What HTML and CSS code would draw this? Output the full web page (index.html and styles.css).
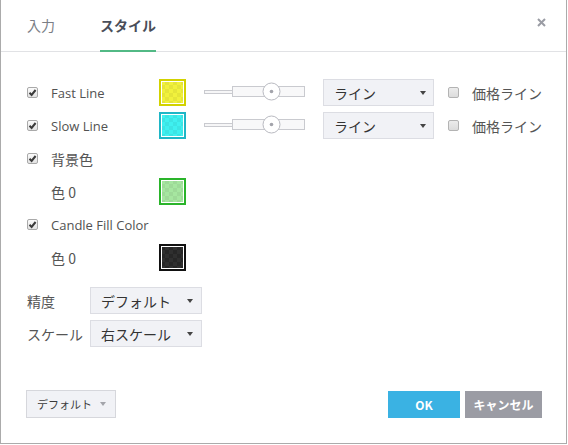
FILE: index.html
```html
<!DOCTYPE html>
<html lang="ja">
<head>
<meta charset="utf-8">
<title>スタイル</title>
<link rel="stylesheet" href="styles.css">
</head>
<body>
<div class="dialog">
  <div class="header">
    <div class="tab">入力</div>
    <div class="tab active">スタイル</div>
    <div class="close">
      <svg width="9" height="9" viewBox="0 0 9 9"><path d="M1 1 L8 8 M8 1 L1 8" stroke="#9a9ca4" stroke-width="2" fill="none"/></svg>
    </div>
  </div>

  <div class="content">
    <div class="row">
      <span class="cb on"><svg width="9" height="9" viewBox="0 0 9 9"><path d="M1.5 4.8 L3.6 6.9 L7.6 2" stroke="#3b3b3b" stroke-width="2" fill="none"/></svg></span>
      <span class="lbl">Fast Line</span>
      <span class="swatch sw-yellow"></span>
      <svg class="slider" width="101" height="27" viewBox="0 0 101 27">
        <rect x="0.5" y="11.5" width="28" height="3" fill="#f6f6f7" stroke="#c9cacf"/>
        <rect x="28.5" y="7.5" width="72" height="10" fill="#f8f8f9" stroke="#c9cacf"/>
        <circle cx="67.5" cy="12.5" r="8.5" fill="#fff" stroke="#b9bac1"/>
        <circle cx="67.5" cy="12.5" r="1.8" fill="#a3a4ab"/>
      </svg>
      <span class="sel sel-line"><span class="ja">ライン</span><span class="arrow"></span></span>
      <span class="cb off price"></span>
      <span class="ja">価格ライン</span>
    </div>
    <div class="row">
      <span class="cb on"><svg width="9" height="9" viewBox="0 0 9 9"><path d="M1.5 4.8 L3.6 6.9 L7.6 2" stroke="#3b3b3b" stroke-width="2" fill="none"/></svg></span>
      <span class="lbl">Slow Line</span>
      <span class="swatch sw-cyan"></span>
      <svg class="slider" width="101" height="27" viewBox="0 0 101 27">
        <rect x="0.5" y="11.5" width="28" height="3" fill="#f6f6f7" stroke="#c9cacf"/>
        <rect x="28.5" y="7.5" width="72" height="10" fill="#f8f8f9" stroke="#c9cacf"/>
        <circle cx="67.5" cy="12.5" r="8.5" fill="#fff" stroke="#b9bac1"/>
        <circle cx="67.5" cy="12.5" r="1.8" fill="#a3a4ab"/>
      </svg>
      <span class="sel sel-line"><span class="ja">ライン</span><span class="arrow"></span></span>
      <span class="cb off price"></span>
      <span class="ja">価格ライン</span>
    </div>
    <div class="row">
      <span class="cb on"><svg width="9" height="9" viewBox="0 0 9 9"><path d="M1.5 4.8 L3.6 6.9 L7.6 2" stroke="#3b3b3b" stroke-width="2" fill="none"/></svg></span>
      <span class="lbl ja">背景色</span>
    </div>
    <div class="row">
      <span class="lbl indent ja">色 0</span>
      <span class="swatch sw-green"></span>
    </div>
    <div class="row">
      <span class="cb on"><svg width="9" height="9" viewBox="0 0 9 9"><path d="M1.5 4.8 L3.6 6.9 L7.6 2" stroke="#3b3b3b" stroke-width="2" fill="none"/></svg></span>
      <span class="lbl wide">Candle Fill Color</span>
    </div>
    <div class="row">
      <span class="lbl indent ja">色 0</span>
      <span class="swatch sw-black"></span>
    </div>
    <div class="row gap-top">
      <span class="flabel ja">精度</span>
      <span class="sel sel-form"><span class="ja">デフォルト</span><span class="arrow"></span></span>
    </div>
    <div class="row">
      <span class="flabel ja">スケール</span>
      <span class="sel sel-form"><span class="ja">右スケール</span><span class="arrow"></span></span>
    </div>
  </div>

  <div class="footer">
    <span class="btn-default"><span class="btn-text">デフォルト</span><span class="arrow light"></span></span>
    <span class="btn ok">OK</span>
    <span class="btn cancel">キャンセル</span>
  </div>
</div>
</body>
</html>
```

FILE: styles.css
```css
* { box-sizing: border-box; }

body {
  margin: 0;
  background: #fff;
  font-family: "Open Sans", "Noto Sans CJK JP", sans-serif;
  font-size: 13px;
  color: #525252;
}

.dialog {
  width: 567px;
  height: 444px;
  border: 1px solid #ababab;
  border-top: 0;
  display: flex;
  flex-direction: column;
}

.header {
  height: 52px;
  border-bottom: 1px solid #e1e2e5;
  display: flex;
  align-items: flex-start;
  padding-left: 26px;
}

.tab {
  height: 52px;
  margin-bottom: -1px;
  display: flex;
  align-items: center;
  font-family: "Noto Sans CJK JP", sans-serif;
  font-size: 14px;
  color: #7b7e86;
  border-bottom: 2px solid transparent;
}

.tab + .tab { margin-left: 45px; }

.tab.active {
  color: #4a4e59;
  font-weight: bold;
  border-bottom-color: #52b985;
}

.close {
  margin-left: auto;
  margin-right: 20px;
  margin-top: 18px;
  width: 9px;
  height: 9px;
  display: flex;
}

.content {
  padding: 27px 0 0 26px;
  display: flex;
  flex-direction: column;
}

.row {
  display: flex;
  align-items: center;
  height: 27px;
  margin-bottom: 6px;
}

.row.gap-top { margin-top: 10px; }

.ja {
  font-family: "Noto Sans CJK JP", sans-serif;
  font-size: 14px;
  color: #555;
}

.cb {
  width: 11px;
  height: 11px;
  border: 1px solid #a9a9a9;
  border-radius: 2px;
  background: linear-gradient(#fbfbfb, #e2e2e2);
  display: flex;
  align-items: center;
  justify-content: center;
  margin-right: 13px;
  flex: none;
}

.cb svg { display: block; }

.cb.off {
  background: linear-gradient(#ececec, #dcdcdc);
  border-color: #b3b3b3;
}

.cb.price { margin-left: 14px; }

.lbl { width: 108px; flex: none; }
.lbl.wide { width: auto; }
.lbl.indent { margin-left: 24px; }

.swatch {
  width: 27px;
  height: 27px;
  border: 2px solid #ccc;
  box-shadow: inset 0 0 0 1px #fff;
  flex: none;
  background-size: 8px 8px;
}

.sw-yellow {
  border-color: #d2d200;
  background-color: #f1f13c;
  background-image: repeating-conic-gradient(rgba(0,0,0,0.05) 0 25%, transparent 0 50%);
}

.sw-cyan {
  border-color: #1fb6c6;
  background-color: #3ff0f0;
  background-image: repeating-conic-gradient(rgba(0,0,0,0.05) 0 25%, transparent 0 50%);
}

.sw-green {
  border-color: #2ab42a;
  background-color: #a6e6a0;
  background-image: repeating-conic-gradient(rgba(0,0,0,0.05) 0 25%, transparent 0 50%);
}

.sw-black {
  border-color: #111;
  background-color: #262626;
  background-image: repeating-conic-gradient(rgba(255,255,255,0.04) 0 25%, transparent 0 50%);
}

.slider {
  margin-left: 18px;
  flex: none;
  display: block;
}

.sel {
  display: flex;
  align-items: center;
  justify-content: space-between;
  height: 27px;
  background: #f1f2f6;
  border: 1px solid #dcdde3;
  padding: 0 7px 0 10px;
  flex: none;
}

.sel .ja { color: #333; }

.sel-line { width: 111px; margin-left: 18px; }
.sel-form { width: 112px; padding-right: 8px; }

.arrow {
  width: 0;
  height: 0;
  border-left: 3.5px solid transparent;
  border-right: 3.5px solid transparent;
  border-top: 4px solid #444;
  flex: none;
}

.arrow.light { border-top-color: #a3a4aa; }

.flabel {
  width: 63px;
  flex: none;
}

.footer {
  margin-top: auto;
  padding: 0 24px 25px 25px;
  display: flex;
  align-items: center;
}

.btn-default {
  width: 90px;
  height: 28px;
  background: #f1f2f6;
  border: 1px solid #d6d7dc;
  display: flex;
  align-items: center;
  justify-content: space-between;
  padding: 0 9px 0 10px;
  font-family: "Noto Sans CJK JP", sans-serif;
  font-size: 11px;
  color: #3b3b3b;
  white-space: nowrap;
}

.btn-text { white-space: nowrap; }

.btn {
  height: 27px;
  display: flex;
  align-items: center;
  justify-content: center;
  color: #fff;
  font-family: "Noto Sans CJK JP", sans-serif;
  font-weight: bold;
  font-size: 12px;
}

.ok {
  margin-left: auto;
  width: 72px;
  background: #3ab2e3;
}

.cancel {
  margin-left: 5px;
  width: 77px;
  background: #9b9ca4;
}
```
